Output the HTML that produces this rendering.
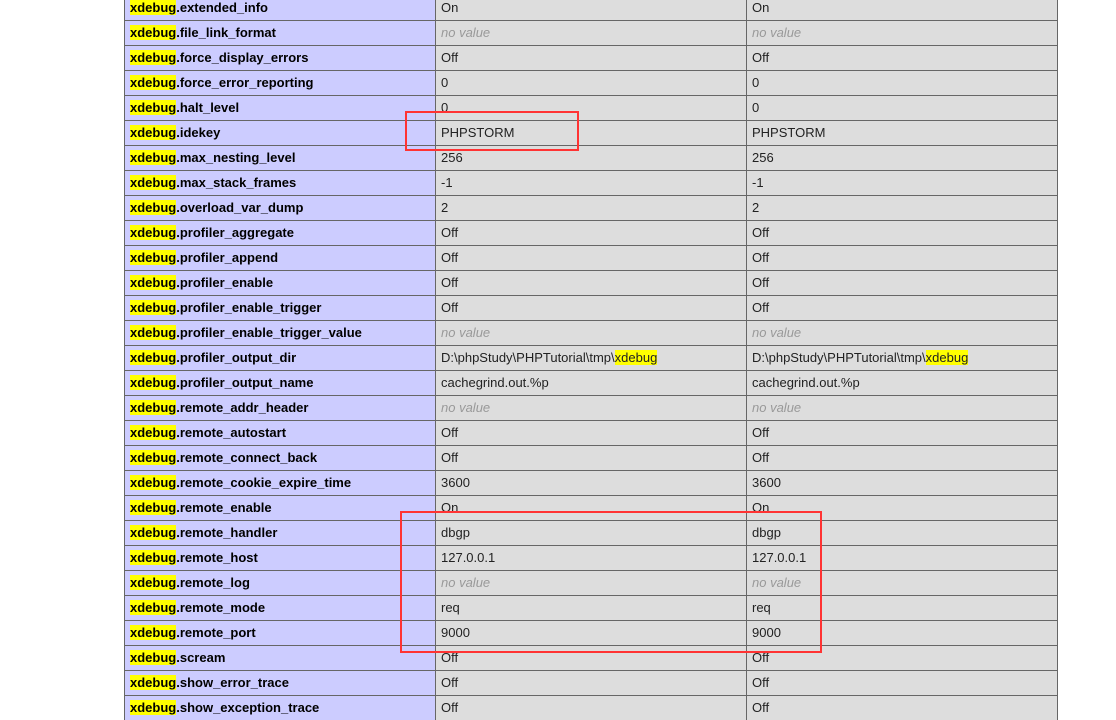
<!DOCTYPE html><html><head><style>
body{margin:0;width:1116px;height:698px;background:#fff;position:relative;overflow:hidden;font-family:"Liberation Sans","Noto Sans CJK SC",sans-serif;font-size:13px;color:#222}
.r{position:absolute;left:124px;width:934px;height:24px;border-top:1px solid #666;}
.c{position:absolute;top:0;height:24px;line-height:24px;box-sizing:border-box;padding-left:5px;white-space:nowrap}
.a{left:0;width:311px;background:#ccf;font-weight:bold;color:#000;border-left:1px solid #666}
.b{left:311px;width:311px;background:#ddd;border-left:1px solid #666}
.d{left:622px;width:312px;background:#ddd;border-left:1px solid #666;border-right:1px solid #666}
.y{background:#ff0}
i{color:#999}
.box{position:absolute;border:2.5px solid #f33;box-sizing:border-box}
</style></head><body>
<div id="t"></div>
<script>
var rows=[["extended_info","On"],["file_link_format",null],["force_display_errors","Off"],["force_error_reporting","0"],["halt_level","0"],["idekey","PHPSTORM"],["max_nesting_level","256"],["max_stack_frames","-1"],["overload_var_dump","2"],["profiler_aggregate","Off"],["profiler_append","Off"],["profiler_enable","Off"],["profiler_enable_trigger","Off"],["profiler_enable_trigger_value",null],["profiler_output_dir","D:\\phpStudy\\PHPTutorial\\tmp\\<span class=y>xdebug</span>"],["profiler_output_name","cachegrind.out.%p"],["remote_addr_header",null],["remote_autostart","Off"],["remote_connect_back","Off"],["remote_cookie_expire_time","3600"],["remote_enable","On"],["remote_handler","dbgp"],["remote_host","127.0.0.1"],["remote_log",null],["remote_mode","req"],["remote_port","9000"],["scream","Off"],["show_error_trace","Off"],["show_exception_trace","Off"]];
var h="";rows.forEach(function(r,i){var v=r[1]===null?"<i>no value</i>":r[1];
h+='<div class="r" style="top:'+(-5+25*i)+'px"><div class="c a"><span class="y">xdebug</span>.'+r[0]+'</div><div class="c b">'+v+'</div><div class="c d">'+v+'</div></div>';});
document.getElementById("t").innerHTML=h;
</script>
<div class="box" style="left:405px;top:111px;width:174px;height:40px"></div>
<div class="box" style="left:400px;top:511px;width:422px;height:142px"></div>
</body></html>
